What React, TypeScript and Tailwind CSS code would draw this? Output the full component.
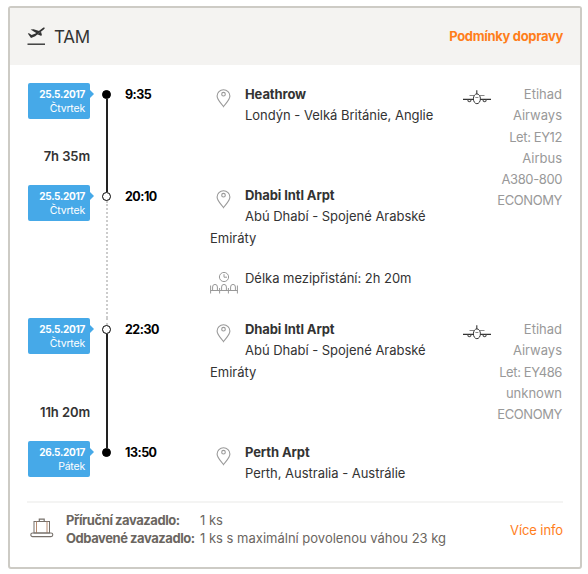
import React from 'react';

interface Stop {
  date: string;
  day: string;
  time: string;
  duration?: string;
  airport: string;
  place: string[];
  layover?: string;
  flight?: string[];
  height: string;
  textTop?: string;
  hollow?: boolean;
  before: string;
  after: string;
}

const solid = 'w-[2px] bg-[#222]';
const dotted = 'w-0 border-l-2 border-dotted border-[#ccc]';

const stops: Stop[] = [
  {
    date: '25.5.2017',
    day: 'Čtvrtek',
    time: '9:35',
    duration: '7h 35m',
    airport: 'Heathrow',
    place: ['Londýn - Velká Británie, Anglie'],
    flight: ['Etihad', 'Airways', 'Let: EY12', 'Airbus', 'A380-800', 'ECONOMY'],
    height: 'h-[102px]',
    textTop: 'pt-px',
    before: 'w-0',
    after: solid,
  },
  {
    date: '25.5.2017',
    day: 'Čtvrtek',
    time: '20:10',
    airport: 'Dhabi Intl Arpt',
    place: ['Abú Dhabí - Spojené Arabské', 'Emiráty'],
    layover: 'Délka mezipřistání: 2h 20m',
    height: 'h-[133px]',
    hollow: true,
    before: solid,
    after: dotted,
  },
  {
    date: '25.5.2017',
    day: 'Čtvrtek',
    time: '22:30',
    duration: '11h 20m',
    airport: 'Dhabi Intl Arpt',
    place: ['Abú Dhabí - Spojené Arabské', 'Emiráty'],
    flight: ['Etihad', 'Airways', 'Let: EY486', 'unknown', 'ECONOMY'],
    height: 'h-[123px]',
    textTop: 'pt-px',
    hollow: true,
    before: dotted,
    after: solid,
  },
  {
    date: '26.5.2017',
    day: 'Pátek',
    time: '13:50',
    airport: 'Perth Arpt',
    place: ['Perth, Australia - Austrálie'],
    height: 'h-[60px]',
    textTop: 'pt-px',
    before: solid,
    after: 'w-0',
  },
];

const TakeoffIcon = () => (
  <svg width="19" height="19" viewBox="0 0 19 19" fill="none" stroke="#333">
    <path d="M0.5 17.2H18" strokeWidth="1.4" />
    <path d="M0.8 6.6L2 6.2L4.6 8L8.5 6.4L15.8 1C17 0.3 18 0.6 17.8 1.3C17.6 2.2 10 8 8.2 9.2L4 11Z" fill="#333" stroke="none" />
    <path d="M3.6 2.6L6.6 2.2L13 4.2L10 6.4Z" fill="#333" stroke="none" />
    <path d="M10.2 7.2L14 4.8L15 8.2L13.8 8.8Z" fill="#333" stroke="none" />
  </svg>
);

const PinIcon = () => (
  <svg width="15" height="19" viewBox="0 0 15 19" fill="none" stroke="#999" strokeWidth="1.1">
    <path d="M7.5 17.6C6 14.8 1.1 11.2 1.1 7A6.4 6.2 0 0 1 13.9 7C13.9 11.2 9 14.8 7.5 17.6Z" />
    <circle cx="7.5" cy="5.2" r="1.8" />
  </svg>
);

const PlaneIcon = () => (
  <svg width="28" height="15" viewBox="0 0 28 15" fill="none" stroke="#333">
    <path d="M13.8 0.3V4" strokeWidth="1.1" />
    <path d="M6.5 5.5H11M17 5.5H21.5" stroke="#888" />
    <path d="M0 9.4H10.5M17.3 9.4H28" strokeWidth="1.2" />
    <ellipse cx="13.9" cy="8.8" rx="3.5" ry="4.9" />
    <path d="M12.4 7.5H15.4" stroke="#888" />
    <path d="M4.8 9.5A1.6 2.2 0 0 0 8 9.5M20 9.5A1.6 2.2 0 0 0 23.2 9.5" stroke="#555" strokeWidth="1.1" />
  </svg>
);

const WaitingIcon = () => (
  <svg width="28" height="23" viewBox="0 0 28 23" fill="none" stroke="#999">
    <circle cx="14" cy="5" r="4.6" />
    <path d="M14 2.2V5.2H17" />
    <path d="M0.6 13.5V21.5M9.6 16V21.5M18.4 16V21.5M27.4 13.5V21.5M0.6 18.5H27.4" />
    <path d="M2.6 18.5V15A2.4 2.6 0 0 1 7.4 15V18.5M11.6 18.5V15A2.4 2.6 0 0 1 16.4 15V18.5M20.6 18.5V15A2.4 2.6 0 0 1 25.4 15V18.5" />
  </svg>
);

const LuggageIcon = () => (
  <svg width="24" height="20" viewBox="0 0 24 20" fill="none" stroke="#77716b">
    <rect x="4" y="3.5" width="15.5" height="11.5" />
    <path d="M6.5 3.5V15M17 3.5V15" stroke="#b58a70" />
    <path d="M9.3 3.5V1.2H14.2V3.5" strokeWidth="1.2" />
    <rect x="0.8" y="15" width="22" height="3.6" rx="1.8" strokeWidth="1.1" />
  </svg>
);

const StopRow = ({ stop }: { stop: Stop }) => (
  <div className={`flex items-start ${stop.height}`}>
    <div className="flex h-full w-[62px] shrink-0 flex-col items-end justify-between">
      <div className="relative h-9 w-full rounded-[2px] bg-[#46a9e8] pt-[4px] pr-[5px] text-right text-[10px] leading-[14px] text-white">
        <div className="font-bold tracking-[-0.3px]">{stop.date}</div>
        <div className="pt-px text-[10.5px] tracking-[-0.2px]">{stop.day}</div>
        <span className="absolute top-[7px] -right-1 h-0 w-0 border-y-4 border-l-4 border-y-transparent border-l-[#46a9e8]" />
      </div>
      {stop.duration && (
        <div className="pb-[19px] text-[13px] leading-5 font-semibold tracking-[-0.1px] whitespace-nowrap">{stop.duration}</div>
      )}
    </div>

    <div className="ml-3 flex h-full w-[9px] shrink-0 flex-col items-center">
      <div className={`h-[7px] shrink-0 ${stop.before}`} />
      <div className={`size-[9px] shrink-0 rounded-full border-[1.5px] border-black ${stop.hollow ? 'bg-white' : 'bg-black'}`} />
      <div className={`flex-1 ${stop.after}`} />
    </div>

    <div className="ml-[14px] w-[85px] shrink-0 text-[12.5px] leading-[23px] font-bold tracking-[-0.5px] text-black">
      {stop.time}
    </div>

    <div className={`w-[253px] shrink-0 text-[13px] leading-[21.3px] tracking-[-0.02px] whitespace-nowrap ${stop.textTop ?? ''}`}>
      <div className="flex">
        <div className="w-[35px] shrink-0 pt-[5px] pl-[6px]">
          <PinIcon />
        </div>
        <div>
          <div className="font-bold tracking-[-0.1px]">{stop.airport}</div>
          <div>{stop.place[0]}</div>
        </div>
      </div>
      {stop.place[1] && <div>{stop.place[1]}</div>}
      {stop.layover && (
        <div className="mt-[19px] flex">
          <div className="w-[35px] shrink-0 pt-[4px]">
            <WaitingIcon />
          </div>
          <div>{stop.layover}</div>
        </div>
      )}
    </div>

    {stop.flight && (
      <div className="flex flex-1 justify-between pt-px">
        <div className="pt-[6px]">
          <PlaneIcon />
        </div>
        <div className="text-right text-[13px] leading-[21.3px] text-[#999]">
          {stop.flight.map((line) => (
            <div key={line} className={/[A-Z]{2}|\d/.test(line) ? 'tracking-[-0.4px]' : ''}>
              {line}
            </div>
          ))}
        </div>
      </div>
    )}
  </div>
);

const App = () => {
  return (
    <div className="h-[574px] bg-white pt-[6px] pl-2 font-['Inter','Liberation_Sans',sans-serif] text-[#333]">
      <div className="flex h-[563px] w-[574px] flex-col rounded-[3px] border-2 border-[#cdcbc5]">
        <div className="flex h-[57px] shrink-0 items-center justify-between bg-[#f4f3f1] pr-[17px] pl-[17px]">
          <div className="flex items-center">
            <TakeoffIcon />
            <span className="ml-2 text-[17px] leading-6 tracking-[-0.2px]">TAM</span>
          </div>
          <a className="text-[13px] font-bold tracking-[-0.32px] text-[#ff7e1b]">Podmínky dopravy</a>
        </div>

        <div className="flex flex-col pt-[18px] pr-[18px] pl-[18px]">
          {stops.map((stop) => (
            <StopRow key={stop.time} stop={stop} />
          ))}
        </div>

        <div className="mr-[17px] ml-[17px] flex items-start border-t-2 border-[#f4f4f3] pt-[8px] text-[13px] leading-[18px] text-[#6b665f]">
          <div className="w-[39px] shrink-0 pt-[7px] pl-[3px]">
            <LuggageIcon />
          </div>
          <div className="w-[134px] shrink-0 font-bold tracking-[-0.44px] whitespace-nowrap">
            <div>Příruční zavazadlo:</div>
            <div>Odbavené zavazadlo:</div>
          </div>
          <div className="flex-1 whitespace-nowrap">
            <div>1 ks</div>
            <div>1 ks s maximální povolenou váhou 23 kg</div>
          </div>
          <a className="pt-[10px] tracking-[-0.1px] text-[#ff7e1b]">Více info</a>
        </div>
      </div>
    </div>
  );
};

export default App;
